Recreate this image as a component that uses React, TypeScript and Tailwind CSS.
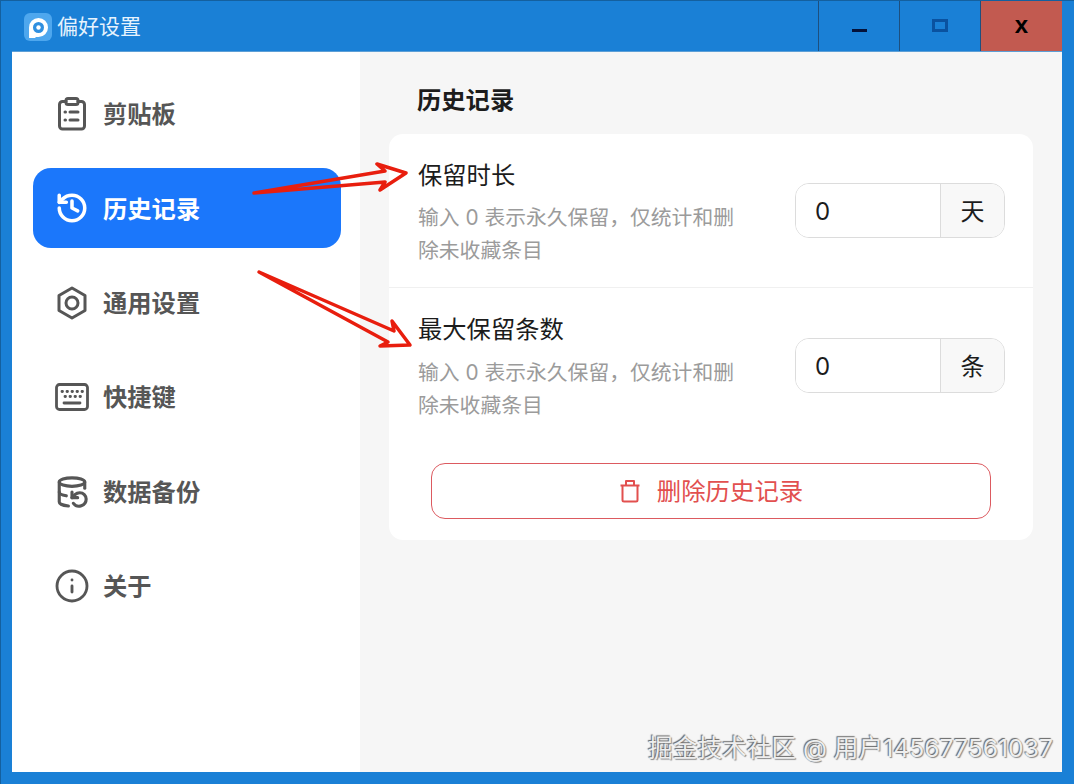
import { DatabaseBackup, History, Info } from "lucide-react";
import type { ReactNode } from "react";

const FONT = "font-['Inter','Noto_Sans_CJK_SC',sans-serif]";

function ClipboardIcon() {
  return (
    <svg width="32" height="34" viewBox="0 0 32 34" fill="none" stroke="currentColor" strokeWidth="3" strokeLinecap="round" strokeLinejoin="round">
      <path d="M10 4.500H6.500A3 3 0 0 0 3.500 7.500V29a3 3 0 0 0 3 3h19a3 3 0 0 0 3-3V7.500a3 3 0 0 0-3-3H22" />
      <rect x="10" y="1.500" width="12" height="6" rx="2" />
      <path d="M14 15h8M14 23h8M9 15h.5M9 23h.5" />
    </svg>
  );
}

function HexIcon() {
  return (
    <svg width="32" height="34" viewBox="0 0 32 34" fill="none" stroke="currentColor" strokeWidth="3" strokeLinejoin="round">
      <path d="M16 2 29 9.500v15L16 32 3 24.500v-15Z" />
      <circle cx="16" cy="17" r="6" />
    </svg>
  );
}

function KeyboardIcon() {
  return (
    <svg width="34" height="28" viewBox="0 0 34 28" fill="none" stroke="currentColor" strokeWidth="2.800" strokeLinecap="round">
      <rect x="1.500" y="1.500" width="31" height="25" rx="3" />
      <path d="M7 8.500h.5M12 8.500h.5M17 8.500h.5M22 8.500h.5M27 8.500h.5M10 13.500h.5M15 13.500h.5M20 13.500h.5M25 13.500h.5M9 20h16" />
    </svg>
  );
}

function TrashIcon() {
  return (
    <svg width="22" height="24" viewBox="0 0 22 24" fill="none" stroke="currentColor" strokeWidth="2" strokeLinejoin="round">
      <path d="M1.500 6.500h19M7 6.500V2h8v4.500M3.500 6.500V21a1.500 1.500 0 0 0 1.500 1.500h12a1.500 1.500 0 0 0 1.500-1.500V6.500" />
    </svg>
  );
}

function NavItem({ icon, label, active }: { icon: ReactNode; label: string; active?: boolean }) {
  return (
    <div
      className={
        "flex h-20 items-center rounded-[18px] text-[24.3px] font-bold " +
        (active ? "bg-[#1b77fb] text-white" : "text-[#565656]")
      }
    >
      <span className="ml-[21px] flex w-[36px] justify-center">{icon}</span>
      <span className="mt-px ml-[13px]">{label}</span>
    </div>
  );
}

function SettingRow({ title, unit, first }: { title: string; unit: string; first?: boolean }) {
  return (
    <div className={"flex items-center justify-between pr-[28px] pl-[29px] " + (first ? "border-b border-[#f0f0f0]" : "")}>
      <div className={"w-[322px] pt-6 " + (first ? "pb-5" : "pb-[19px]")}>
        <div className="text-[24.3px] leading-[34px] text-[#1c1c1c]">{title}</div>
        <div className={"text-[20.8px] leading-[33px] text-[#9b9b9b] " + (first ? "mt-[9px]" : "mt-[10px]")}>
          输入 0 表示永久保留，仅统计和删除未收藏条目
        </div>
      </div>
      <div className={"flex h-[55px] w-[210px] overflow-hidden rounded-[14px] border border-[#dcdcdc] text-[24px] text-[#1c1c1c] " + (first ? "" : "mt-[2px]")}>
        <div className="flex flex-1 items-center bg-white pt-[3px] pl-[19px]">0</div>
        <div className="flex w-[64px] items-center justify-center border-l border-[#dcdcdc] bg-[#f8f8f8] pt-[2px]">{unit}</div>
      </div>
    </div>
  );
}

export default function App() {
  return (
    <div className={"relative flex h-[784px] w-[1074px] flex-col overflow-hidden border-t border-l border-[#14609f] bg-[#1a80d6] " + FONT}>
      <header className="flex h-[51px] shrink-0 items-center">
        <div className="ml-[23px] flex h-7 w-7 items-center justify-center rounded-[6px] bg-[#4ea7ee]">
          <svg width="22" height="22" viewBox="0 0 22 22">
            <path d="M2 11.500a9.500 9.500 0 1 1 9.500 9.500H8.500V21a3.200 3.200 0 0 1-6.500 0Z" fill="white" />
            <circle cx="11.500" cy="11.500" r="5.500" fill="#2f8fe0" />
            <circle cx="11.500" cy="11.500" r="2.200" fill="white" />
          </svg>
        </div>
        <span className="ml-[5px] text-[21px] text-[#e6f3fd]">偏好设置</span>
        <div className="mr-3 ml-auto flex h-[51px] self-start border-b border-[#1d4f7e]">
          <div className="flex w-[82px] items-center justify-center border-x border-[#1d4f7e]">
            <div className="mt-[9px] h-[3px] w-[15px] bg-[#04123a]" />
          </div>
          <div className="flex w-[81px] items-center justify-center border-r border-[#1d4f7e]">
            <div className="mb-[2px] h-[13px] w-[16px] border-[3px] border-[#0a52a0]" />
          </div>
          <div className="flex w-[81px] items-center justify-center bg-[#c25a50] pb-[2px] font-['Liberation_Sans',sans-serif] text-[24px] font-bold text-black">
            x
          </div>
        </div>
      </header>

      <div className="ml-[11px] flex h-[720px] w-[1050px] shadow-[0_-1px_0_#5d9fd6]">
        <aside className="flex w-[348px] shrink-0 flex-col gap-[14.4px] bg-white pt-[22px] pr-[19px] pl-[21px]">
          <NavItem icon={<ClipboardIcon />} label="剪贴板" />
          <NavItem icon={<History size={34} strokeWidth={2.5} />} label="历史记录" active />
          <NavItem icon={<HexIcon />} label="通用设置" />
          <NavItem icon={<KeyboardIcon />} label="快捷键" />
          <NavItem icon={<DatabaseBackup size={34} strokeWidth={2.2} />} label="数据备份" />
          <NavItem icon={<Info size={36} strokeWidth={1.9} />} label="关于" />
        </aside>

        <main className="flex-1 bg-[#f6f6f6] pt-[31px] pr-[29px] pl-[29px]">
          <h1 className="mb-[17px] pl-[28px] text-[24.3px] leading-[34px] font-bold text-[#1c1c1c]">历史记录</h1>
          <section className="rounded-[14px] bg-white pb-[21px]">
            <SettingRow title="保留时长" unit="天" first />
            <SettingRow title="最大保留条数" unit="条" />
            <button className="mx-[42px] mt-[22px] flex h-[56px] w-[560px] items-center justify-center rounded-[14px] border border-[#dc5a60] text-[24.4px] text-[#e2504f]">
              <TrashIcon />
              <span className="ml-[16px]">删除历史记录</span>
            </button>
          </section>
        </main>
      </div>

      {/* hand drawn annotation arrows over the page */}
      <svg className="pointer-events-none absolute -top-px -left-px" width="1074" height="784" fill="none" stroke="#e81e0e" strokeWidth="3.500" strokeLinejoin="round">
        <path d="M254 193 385 171 377 164 406 173 380 190 385 182Z" />
        <path d="M259 272 394 331 392 321 410 345 380 346 388 342Z" />
      </svg>

      <div className="absolute top-[731px] left-[647px] text-[24.7px] leading-8 whitespace-nowrap text-[#eeeeee] [text-shadow:-1px_-1px_1px_#666,1px_1px_1px_#888]">
        掘金技术社区 @ 用户145677561037
      </div>
    </div>
  );
}
